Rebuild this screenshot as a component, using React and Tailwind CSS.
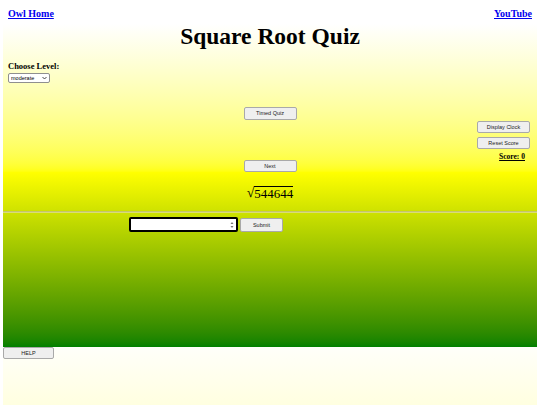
import React from 'react'

const serif = { fontFamily: '"Liberation Serif", "Times New Roman", serif' }

const SmallButton = ({ children, className = '' }) => (
  <button
    className={`flex items-center justify-center bg-[#efefef] border border-[#a9a9a9] rounded-[2px] text-[5.5px] text-[#222] ${className}`}
    style={{ fontFamily: '"Liberation Sans", Arial, sans-serif' }}
  >
    {children}
  </button>
)

export default function App() {
  return (
    <div className="h-[405px] w-[540px] bg-white px-[3px] flex flex-col overflow-hidden" style={serif}>
      {/* top links */}
      <div className="h-[24px] flex justify-between px-[5px] pt-[8px]">
        <a href="#" className="text-[10px] leading-[12px] font-bold text-[#0000ee] underline">Owl Home</a>
        <a href="#" className="text-[10px] leading-[12px] font-bold text-[#0000ee] underline">YouTube</a>
      </div>

      {/* main quiz area */}
      <div className="h-[323px] flex flex-col bg-linear-to-b from-white from-0% via-[#ffff00] via-[46%] to-[#008000] to-100%">
        <h1 className="text-[23.5px] leading-[24px] font-bold text-center text-black">Square Root Quiz</h1>

        <div className="h-[163px] grid grid-cols-[1fr_auto_1fr]">
          <div className="pl-[5px] pt-[13px]">
            <div className="text-[8.5px] leading-[10px] font-bold text-black">Choose Level:</div>
            <div className="relative mt-[2px] w-[42px] h-[10px]">
              <select
                defaultValue="moderate"
                className="block appearance-none w-full h-[10px] bg-white border border-[#8f8f8f] rounded-[2px] pl-[2px] py-0 text-[5.5px] leading-[8px] text-black"
                style={{ fontFamily: '"Liberation Sans", Arial, sans-serif' }}
              >
                <option value="easy">easy</option>
                <option value="moderate">moderate</option>
                <option value="hard">hard</option>
              </select>
              <svg className="absolute right-[3px] top-[3px] w-[5px] h-[4px] pointer-events-none" viewBox="0 0 10 6">
                <path d="M1 1 L5 5 L9 1" stroke="#333" strokeWidth="1.8" fill="none" />
              </svg>
            </div>
          </div>

          <div className="flex flex-col items-center pt-[59px]">
            <SmallButton className="w-[53px] h-[13px]">Timed Quiz</SmallButton>
            <SmallButton className="w-[53px] h-[12px] mt-[40px]">Next</SmallButton>
            <div className="flex items-end mt-[14px] text-[13px] leading-[13px] text-black">
              <span className="text-[14px] leading-[12px]">√</span>
              <span className="border-t border-black leading-[11px] pt-[1px]">544644</span>
            </div>
          </div>

          <div className="flex flex-col items-end pr-[7px] pt-[73px]">
            <SmallButton className="w-[53px] h-[12px]">Display Clock</SmallButton>
            <SmallButton className="w-[53px] h-[12px] mt-[4px]">Reset Score</SmallButton>
            <div className="mt-[3px] mr-[5px] text-[7.5px] leading-[10px] font-bold text-black underline">Score: 0</div>
          </div>
        </div>

        <div className="h-[2px] border-t border-[#c4c46c] bg-[#d9dc78]" />

        <div className="flex items-start mt-[4px] ml-[126px]">
          <div className="relative w-[109px] h-[15px] bg-white border-2 border-black rounded-[2px]">
            <input type="text" className="w-full h-full outline-none bg-transparent text-[8px] px-[2px]" />
            <svg className="absolute right-[2px] top-[2px] w-[4px] h-[8px]" viewBox="0 0 4 8">
              <path d="M0.5 3 L2 1 L3.5 3 Z" fill="#777" />
              <path d="M0.5 5 L2 7 L3.5 5 Z" fill="#777" />
            </svg>
          </div>
          <SmallButton className="w-[43px] h-[14px] ml-[2px] mt-[1px]">Submit</SmallButton>
        </div>
      </div>

      {/* help area */}
      <div className="flex-1 bg-linear-to-b from-[#fffffa] to-[#ffffe0]">
        <SmallButton className="w-[51px] h-[12px]">HELP</SmallButton>
      </div>
    </div>
  )
}
